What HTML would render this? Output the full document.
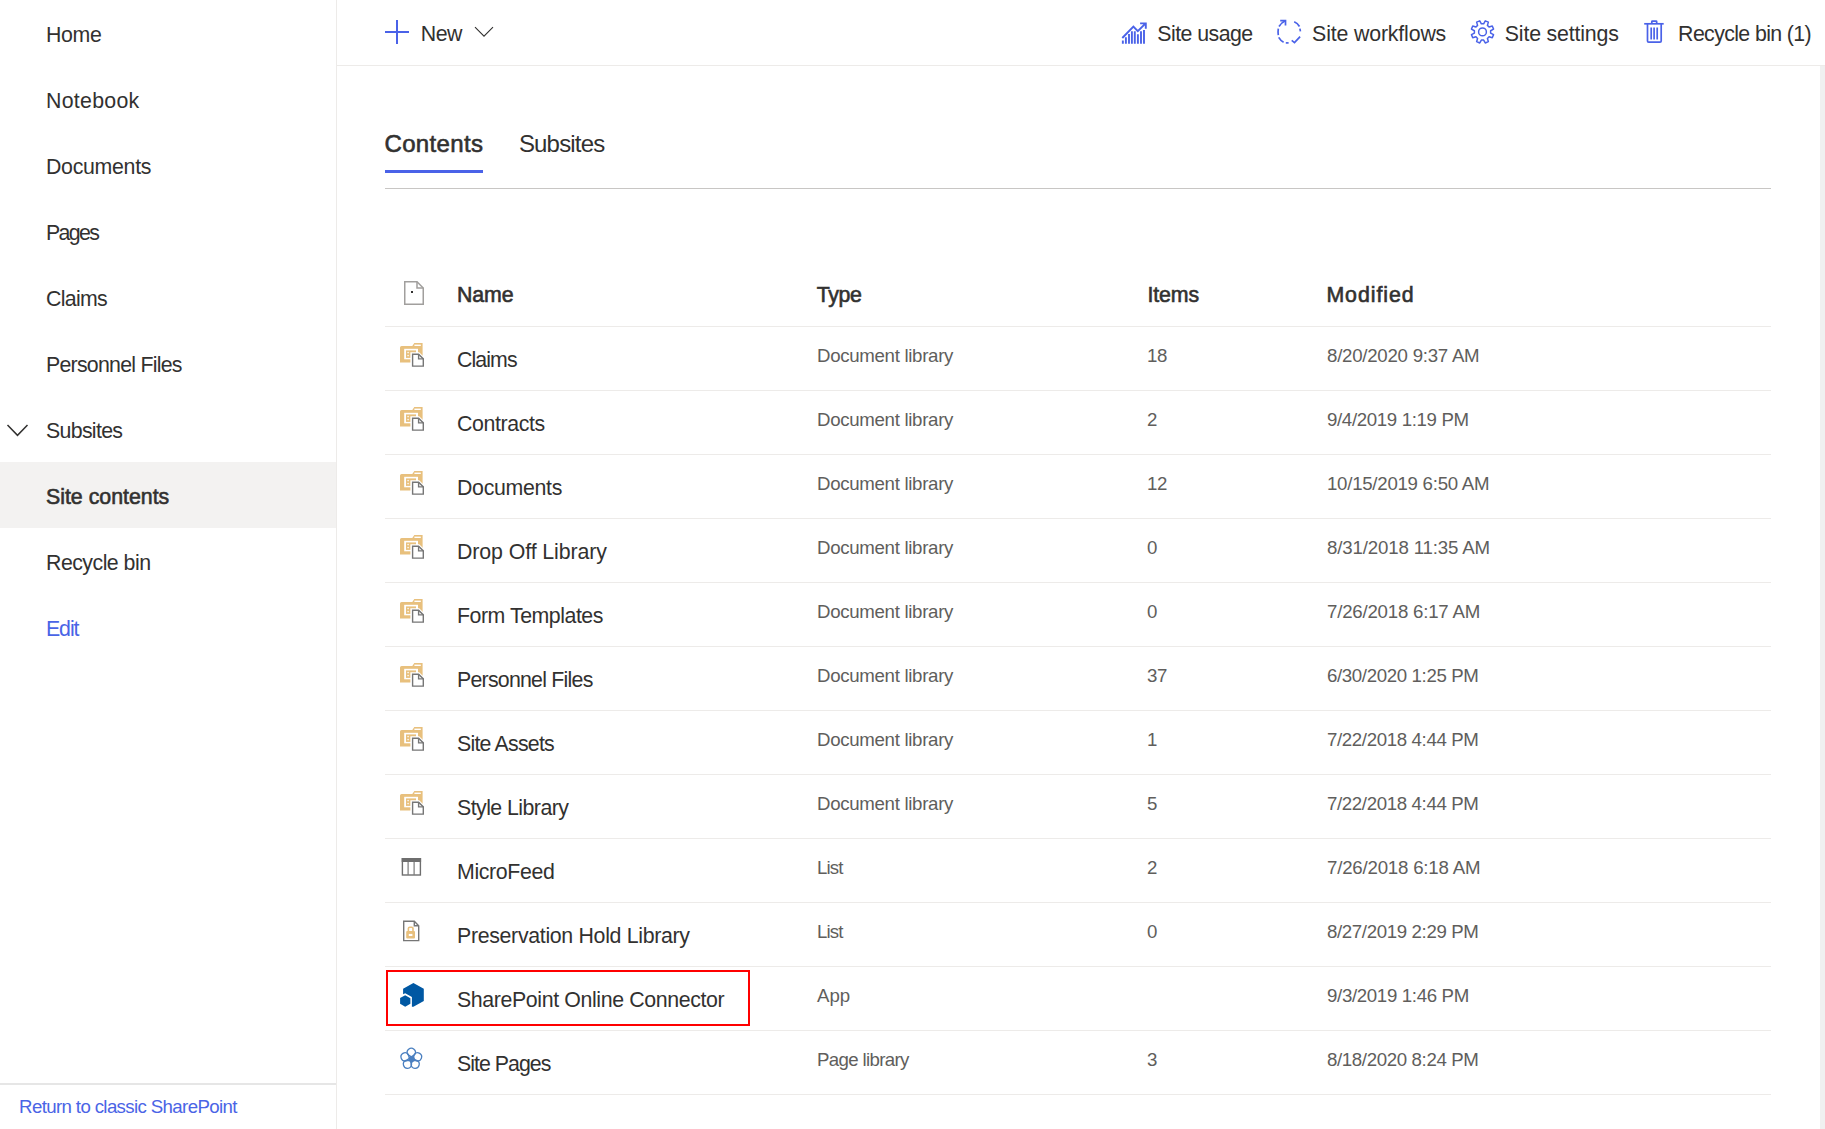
<!DOCTYPE html>
<html><head><meta charset="utf-8">
<style>
html,body{margin:0;padding:0;}
body{width:1825px;height:1129px;overflow:hidden;background:#fff;position:relative;font-family:"Liberation Sans",sans-serif;color:#323130;}
.a{position:absolute;white-space:nowrap;}
.t{position:absolute;white-space:nowrap;font-size:21.33px;line-height:24px;letter-spacing:-0.4px;color:#323130;}
.b{font-weight:normal;-webkit-text-stroke:0.6px #323130;}
.s{position:absolute;white-space:nowrap;font-size:18.67px;line-height:22px;letter-spacing:-0.35px;color:#605e5c;}
.blue{color:#4a64e6;}
</style></head><body>

<div class="a" style="left:336px;top:0;width:1px;height:1129px;background:#edebe9"></div>
<div class="a" style="left:0;top:462px;width:336px;height:66px;background:#f3f2f1"></div>
<div id="x1" class="t" style="left:46.00px;top:23px;letter-spacing:-0.332px">Home</div>
<div id="x2" class="t" style="left:46.00px;top:89px;letter-spacing:0.270px">Notebook</div>
<div id="x3" class="t" style="left:46.00px;top:155px;letter-spacing:-0.300px">Documents</div>
<div id="x4" class="t" style="left:46.00px;top:221px;letter-spacing:-1.650px">Pages</div>
<div id="x5" class="t" style="left:46.00px;top:287px;letter-spacing:-0.680px">Claims</div>
<div id="x6" class="t" style="left:46.00px;top:353px;letter-spacing:-0.757px">Personnel Files</div>
<div id="x7" class="t" style="left:46.00px;top:419px;letter-spacing:-0.686px">Subsites</div>
<div id="x8" class="t b" style="left:46.00px;top:485px;letter-spacing:-0.008px">Site contents</div>
<div id="x9" class="t" style="left:46.00px;top:551px;letter-spacing:-0.520px">Recycle bin</div>
<div id="x10" class="t blue" style="left:46.00px;top:617px;letter-spacing:-1.101px">Edit</div>
<svg class="a" style="left:6px;top:423px" width="24" height="16" viewBox="0 0 24 16"><path d="M1.5 2 L11.5 12.3 L21.5 2" fill="none" stroke="#323130" stroke-width="1.5"/></svg>
<div class="a" style="left:0;top:1083px;width:336px;height:2px;background:#e6e6e6"></div>
<div id="x11" class="s blue" style="left:19.10px;top:1096px;letter-spacing:-0.634px">Return to classic SharePoint</div>
<div class="a" style="left:337px;top:65px;width:1488px;height:1px;background:#edebe9"></div>
<svg class="a" style="left:385px;top:20px" width="24" height="24" viewBox="0 0 24 24"><path d="M0 12H24M12 0V24" stroke="#4a62e8" stroke-width="2"/></svg>
<div id="x12" class="t" style="left:420.80px;top:22px;letter-spacing:-0.550px">New</div>
<svg class="a" style="left:474px;top:26px" width="20" height="12" viewBox="0 0 20 12"><path d="M1 1.2L10 10.2L19 1.2" fill="none" stroke="#323130" stroke-width="1.1"/></svg>
<svg class="a" style="left:1117px;top:17px" width="35" height="33" viewBox="0 0 35 33"><path d="M5.85 23.4V26.8M8.9 20.2V26.8M12 17.1V26.8M14.9 14.2V26.8M17.8 14.2V26.8M20.9 17.3V26.8M24 14.2V26.8M27 13V26.8" stroke="#4a62e8" stroke-width="1.9" fill="none"/><path d="M5.3 21L16.4 9.6L20.8 14.2L28.1 6.8M23.1 6.4H28.8V11.8" stroke="#4a62e8" stroke-width="1.9" fill="none"/></svg>
<div id="x13" class="t" style="left:1157.30px;top:22px;letter-spacing:-0.545px">Site usage</div>
<svg class="a" style="left:1270px;top:15px" width="40" height="35" viewBox="0 0 40 35"><g stroke="#4a62e8" stroke-width="1.7" fill="none">
<path d="M9 11.5Q11.5 7.5 15.3 5.8"/><path d="M10.2 5.6H15.5V10.5"/>
<path d="M24.2 6.7Q27.8 8.3 29.5 11.5"/><path d="M29.9 13.6L30.4 16.4"/>
<path d="M8.3 13.6Q7.8 17 8.3 20.2"/><path d="M8.7 22.3Q10.6 25.6 13.6 27.2"/><path d="M15.8 27.9H18.6"/>
<path d="M21.7 25.4L24.5 27.6L30.1 21.6"/></g></svg>
<div id="x14" class="t" style="left:1312.10px;top:22px;letter-spacing:-0.162px">Site workflows</div>
<svg class="a" style="left:1465px;top:15px" width="35" height="35" viewBox="0 0 35 35"><path d="M16.36 8.78 L18.64 8.78 L20.26 5.84 L23.37 7.13 L22.43 10.35 L24.05 11.97 L27.27 11.03 L28.56 14.14 L25.62 15.76 L25.62 18.04 L28.56 19.66 L27.27 22.77 L24.05 21.83 L22.43 23.45 L23.37 26.67 L20.26 27.96 L18.64 25.02 L16.36 25.02 L14.74 27.96 L11.63 26.67 L12.57 23.45 L10.95 21.83 L7.73 22.77 L6.44 19.66 L9.38 18.04 L9.38 15.76 L6.44 14.14 L7.73 11.03 L10.95 11.97 L12.57 10.35 L11.63 7.13 L14.74 5.84Z" fill="none" stroke="#4a62e8" stroke-width="1.5" stroke-linejoin="round"/><circle cx="17.5" cy="16.9" r="3.9" fill="none" stroke="#4a62e8" stroke-width="1.5"/></svg>
<div id="x15" class="t" style="left:1504.80px;top:22px;letter-spacing:-0.176px">Site settings</div>
<svg class="a" style="left:1638px;top:15px" width="35" height="35" viewBox="0 0 35 35"><g stroke="#4a62e8" stroke-width="1.7" fill="none">
<path d="M6.2 8.8H25.7"/><path d="M13.8 8.8V6.8Q13.8 6.2 14.4 6.2H18.1Q18.7 6.2 18.7 6.8V8.8"/>
<path d="M9.5 8.8V26Q9.5 27.2 10.7 27.2H22Q23.2 27.2 23.2 26V8.8"/>
<path d="M13.2 12.4V24.5M16.1 12.4V24.5M19.2 12.4V24.5"/></g></svg>
<div id="x16" class="t" style="left:1678.10px;top:22px;letter-spacing:-0.619px">Recycle bin (1)</div>
<div class="a" style="left:1820px;top:66px;width:5px;height:1063px;background:#f0f0f0"></div>
<div id="x17" class="t b" style="left:384.50px;top:130px;letter-spacing:0.341px;font-size:24px;line-height:28px">Contents</div>
<div id="x18" class="t" style="left:518.90px;top:130px;letter-spacing:-0.814px;font-size:24px;line-height:28px">Subsites</div>
<div class="a" style="left:385px;top:170px;width:98px;height:3px;background:#4a62e8"></div>
<div class="a" style="left:385px;top:188px;width:1386px;height:1px;background:#c8c6c4"></div>
<svg class="a" style="left:404px;top:281px" width="20" height="24" viewBox="0 0 20 24"><path d="M0.75 0.75H13L19.25 7V23.25H0.75Z" fill="#fff" stroke="#a19f9d" stroke-width="1.5"/><path d="M13 0.75V7H19.25" fill="none" stroke="#a19f9d" stroke-width="1.5"/></svg>
<div id="x19" class="t b" style="left:457.00px;top:283px;letter-spacing:-0.100px">Name</div>
<div id="x20" class="t b" style="left:816.70px;top:283px;letter-spacing:-0.334px">Type</div>
<div id="x21" class="t b" style="left:1147.50px;top:283px;letter-spacing:-0.150px">Items</div>
<div id="x22" class="t b" style="left:1326.40px;top:283px;letter-spacing:0.957px">Modified</div>
<div class="a" style="left:411px;top:291px;width:1.5px;height:1.5px;background:#323130"></div>
<div class="a" style="left:385px;top:326px;width:1386px;height:1px;background:#edebe9"></div>
<svg class="a" style="left:395px;top:338px" width="35" height="40" viewBox="0 0 35 40">
<path d="M5 24.4V9.6Q5 8 6.6 8H17.3L19.3 5H27.6V24.4Z" fill="#e8c07d"/>
<rect x="19.4" y="6.6" width="6.4" height="1.4" fill="#fff"/>
<rect x="9.2" y="10.8" width="13.8" height="10.5" fill="#fff"/>
<rect x="11" y="12.4" width="10" height="7.5" fill="#e8c07d"/>
<circle cx="13.1" cy="14.6" r="0.8" fill="#fff"/><circle cx="13.1" cy="17.6" r="0.8" fill="#fff"/>
<path d="M15.4 30.2V14.2H24.2L30.4 20.4V30.2Z" fill="#fff"/>
<path d="M17.6 16.2H23.6L28.3 20.9V28.1H17.6Z" fill="#fff" stroke="#767676" stroke-width="1.4"/>
<path d="M23.6 16.2V20.9H28.3" fill="none" stroke="#767676" stroke-width="1.4"/>
</svg>
<div id="x23" class="t" style="left:457.00px;top:348px;letter-spacing:-0.920px">Claims</div>
<div id="x24" class="s" style="left:817.00px;top:345px;letter-spacing:-0.309px">Document library</div>
<div id="x25" class="s" style="left:1147.00px;top:345px">18</div>
<div id="x26" class="s" style="left:1327.00px;top:345px;letter-spacing:-0.250px">8/20/2020 9:37 AM</div>
<div class="a" style="left:385px;top:390px;width:1386px;height:1px;background:#edebe9"></div>
<svg class="a" style="left:395px;top:402px" width="35" height="40" viewBox="0 0 35 40">
<path d="M5 24.4V9.6Q5 8 6.6 8H17.3L19.3 5H27.6V24.4Z" fill="#e8c07d"/>
<rect x="19.4" y="6.6" width="6.4" height="1.4" fill="#fff"/>
<rect x="9.2" y="10.8" width="13.8" height="10.5" fill="#fff"/>
<rect x="11" y="12.4" width="10" height="7.5" fill="#e8c07d"/>
<circle cx="13.1" cy="14.6" r="0.8" fill="#fff"/><circle cx="13.1" cy="17.6" r="0.8" fill="#fff"/>
<path d="M15.4 30.2V14.2H24.2L30.4 20.4V30.2Z" fill="#fff"/>
<path d="M17.6 16.2H23.6L28.3 20.9V28.1H17.6Z" fill="#fff" stroke="#767676" stroke-width="1.4"/>
<path d="M23.6 16.2V20.9H28.3" fill="none" stroke="#767676" stroke-width="1.4"/>
</svg>
<div id="x27" class="t" style="left:457.00px;top:412px;letter-spacing:-0.391px">Contracts</div>
<div id="x28" class="s" style="left:817.00px;top:409px;letter-spacing:-0.309px">Document library</div>
<div id="x29" class="s" style="left:1147.00px;top:409px">2</div>
<div id="x30" class="s" style="left:1327.00px;top:409px;letter-spacing:-0.350px">9/4/2019 1:19 PM</div>
<div class="a" style="left:385px;top:454px;width:1386px;height:1px;background:#edebe9"></div>
<svg class="a" style="left:395px;top:466px" width="35" height="40" viewBox="0 0 35 40">
<path d="M5 24.4V9.6Q5 8 6.6 8H17.3L19.3 5H27.6V24.4Z" fill="#e8c07d"/>
<rect x="19.4" y="6.6" width="6.4" height="1.4" fill="#fff"/>
<rect x="9.2" y="10.8" width="13.8" height="10.5" fill="#fff"/>
<rect x="11" y="12.4" width="10" height="7.5" fill="#e8c07d"/>
<circle cx="13.1" cy="14.6" r="0.8" fill="#fff"/><circle cx="13.1" cy="17.6" r="0.8" fill="#fff"/>
<path d="M15.4 30.2V14.2H24.2L30.4 20.4V30.2Z" fill="#fff"/>
<path d="M17.6 16.2H23.6L28.3 20.9V28.1H17.6Z" fill="#fff" stroke="#767676" stroke-width="1.4"/>
<path d="M23.6 16.2V20.9H28.3" fill="none" stroke="#767676" stroke-width="1.4"/>
</svg>
<div id="x31" class="t" style="left:457.00px;top:476px;letter-spacing:-0.309px">Documents</div>
<div id="x32" class="s" style="left:817.00px;top:473px;letter-spacing:-0.309px">Document library</div>
<div id="x33" class="s" style="left:1147.00px;top:473px">12</div>
<div id="x34" class="s" style="left:1327.00px;top:473px;letter-spacing:-0.267px">10/15/2019 6:50 AM</div>
<div class="a" style="left:385px;top:518px;width:1386px;height:1px;background:#edebe9"></div>
<svg class="a" style="left:395px;top:530px" width="35" height="40" viewBox="0 0 35 40">
<path d="M5 24.4V9.6Q5 8 6.6 8H17.3L19.3 5H27.6V24.4Z" fill="#e8c07d"/>
<rect x="19.4" y="6.6" width="6.4" height="1.4" fill="#fff"/>
<rect x="9.2" y="10.8" width="13.8" height="10.5" fill="#fff"/>
<rect x="11" y="12.4" width="10" height="7.5" fill="#e8c07d"/>
<circle cx="13.1" cy="14.6" r="0.8" fill="#fff"/><circle cx="13.1" cy="17.6" r="0.8" fill="#fff"/>
<path d="M15.4 30.2V14.2H24.2L30.4 20.4V30.2Z" fill="#fff"/>
<path d="M17.6 16.2H23.6L28.3 20.9V28.1H17.6Z" fill="#fff" stroke="#767676" stroke-width="1.4"/>
<path d="M23.6 16.2V20.9H28.3" fill="none" stroke="#767676" stroke-width="1.4"/>
</svg>
<div id="x35" class="t" style="left:457.00px;top:540px;letter-spacing:-0.092px">Drop Off Library</div>
<div id="x36" class="s" style="left:817.00px;top:537px;letter-spacing:-0.309px">Document library</div>
<div id="x37" class="s" style="left:1147.00px;top:537px">0</div>
<div id="x38" class="s" style="left:1327.00px;top:537px;letter-spacing:-0.150px">8/31/2018 11:35 AM</div>
<div class="a" style="left:385px;top:582px;width:1386px;height:1px;background:#edebe9"></div>
<svg class="a" style="left:395px;top:594px" width="35" height="40" viewBox="0 0 35 40">
<path d="M5 24.4V9.6Q5 8 6.6 8H17.3L19.3 5H27.6V24.4Z" fill="#e8c07d"/>
<rect x="19.4" y="6.6" width="6.4" height="1.4" fill="#fff"/>
<rect x="9.2" y="10.8" width="13.8" height="10.5" fill="#fff"/>
<rect x="11" y="12.4" width="10" height="7.5" fill="#e8c07d"/>
<circle cx="13.1" cy="14.6" r="0.8" fill="#fff"/><circle cx="13.1" cy="17.6" r="0.8" fill="#fff"/>
<path d="M15.4 30.2V14.2H24.2L30.4 20.4V30.2Z" fill="#fff"/>
<path d="M17.6 16.2H23.6L28.3 20.9V28.1H17.6Z" fill="#fff" stroke="#767676" stroke-width="1.4"/>
<path d="M23.6 16.2V20.9H28.3" fill="none" stroke="#767676" stroke-width="1.4"/>
</svg>
<div id="x39" class="t" style="left:457.00px;top:604px;letter-spacing:-0.470px">Form Templates</div>
<div id="x40" class="s" style="left:817.00px;top:601px;letter-spacing:-0.309px">Document library</div>
<div id="x41" class="s" style="left:1147.00px;top:601px">0</div>
<div id="x42" class="s" style="left:1327.00px;top:601px;letter-spacing:-0.213px">7/26/2018 6:17 AM</div>
<div class="a" style="left:385px;top:646px;width:1386px;height:1px;background:#edebe9"></div>
<svg class="a" style="left:395px;top:658px" width="35" height="40" viewBox="0 0 35 40">
<path d="M5 24.4V9.6Q5 8 6.6 8H17.3L19.3 5H27.6V24.4Z" fill="#e8c07d"/>
<rect x="19.4" y="6.6" width="6.4" height="1.4" fill="#fff"/>
<rect x="9.2" y="10.8" width="13.8" height="10.5" fill="#fff"/>
<rect x="11" y="12.4" width="10" height="7.5" fill="#e8c07d"/>
<circle cx="13.1" cy="14.6" r="0.8" fill="#fff"/><circle cx="13.1" cy="17.6" r="0.8" fill="#fff"/>
<path d="M15.4 30.2V14.2H24.2L30.4 20.4V30.2Z" fill="#fff"/>
<path d="M17.6 16.2H23.6L28.3 20.9V28.1H17.6Z" fill="#fff" stroke="#767676" stroke-width="1.4"/>
<path d="M23.6 16.2V20.9H28.3" fill="none" stroke="#767676" stroke-width="1.4"/>
</svg>
<div id="x43" class="t" style="left:457.00px;top:668px;letter-spacing:-0.763px">Personnel Files</div>
<div id="x44" class="s" style="left:817.00px;top:665px;letter-spacing:-0.309px">Document library</div>
<div id="x45" class="s" style="left:1147.00px;top:665px">37</div>
<div id="x46" class="s" style="left:1327.00px;top:665px;letter-spacing:-0.362px">6/30/2020 1:25 PM</div>
<div class="a" style="left:385px;top:710px;width:1386px;height:1px;background:#edebe9"></div>
<svg class="a" style="left:395px;top:722px" width="35" height="40" viewBox="0 0 35 40">
<path d="M5 24.4V9.6Q5 8 6.6 8H17.3L19.3 5H27.6V24.4Z" fill="#e8c07d"/>
<rect x="19.4" y="6.6" width="6.4" height="1.4" fill="#fff"/>
<rect x="9.2" y="10.8" width="13.8" height="10.5" fill="#fff"/>
<rect x="11" y="12.4" width="10" height="7.5" fill="#e8c07d"/>
<circle cx="13.1" cy="14.6" r="0.8" fill="#fff"/><circle cx="13.1" cy="17.6" r="0.8" fill="#fff"/>
<path d="M15.4 30.2V14.2H24.2L30.4 20.4V30.2Z" fill="#fff"/>
<path d="M17.6 16.2H23.6L28.3 20.9V28.1H17.6Z" fill="#fff" stroke="#767676" stroke-width="1.4"/>
<path d="M23.6 16.2V20.9H28.3" fill="none" stroke="#767676" stroke-width="1.4"/>
</svg>
<div id="x47" class="t" style="left:457.00px;top:732px;letter-spacing:-0.780px">Site Assets</div>
<div id="x48" class="s" style="left:817.00px;top:729px;letter-spacing:-0.309px">Document library</div>
<div id="x49" class="s" style="left:1147.00px;top:729px">1</div>
<div id="x50" class="s" style="left:1327.00px;top:729px;letter-spacing:-0.362px">7/22/2018 4:44 PM</div>
<div class="a" style="left:385px;top:774px;width:1386px;height:1px;background:#edebe9"></div>
<svg class="a" style="left:395px;top:786px" width="35" height="40" viewBox="0 0 35 40">
<path d="M5 24.4V9.6Q5 8 6.6 8H17.3L19.3 5H27.6V24.4Z" fill="#e8c07d"/>
<rect x="19.4" y="6.6" width="6.4" height="1.4" fill="#fff"/>
<rect x="9.2" y="10.8" width="13.8" height="10.5" fill="#fff"/>
<rect x="11" y="12.4" width="10" height="7.5" fill="#e8c07d"/>
<circle cx="13.1" cy="14.6" r="0.8" fill="#fff"/><circle cx="13.1" cy="17.6" r="0.8" fill="#fff"/>
<path d="M15.4 30.2V14.2H24.2L30.4 20.4V30.2Z" fill="#fff"/>
<path d="M17.6 16.2H23.6L28.3 20.9V28.1H17.6Z" fill="#fff" stroke="#767676" stroke-width="1.4"/>
<path d="M23.6 16.2V20.9H28.3" fill="none" stroke="#767676" stroke-width="1.4"/>
</svg>
<div id="x51" class="t" style="left:457.00px;top:796px;letter-spacing:-0.549px">Style Library</div>
<div id="x52" class="s" style="left:817.00px;top:793px;letter-spacing:-0.309px">Document library</div>
<div id="x53" class="s" style="left:1147.00px;top:793px">5</div>
<div id="x54" class="s" style="left:1327.00px;top:793px;letter-spacing:-0.362px">7/22/2018 4:44 PM</div>
<div class="a" style="left:385px;top:838px;width:1386px;height:1px;background:#edebe9"></div>
<svg class="a" style="left:395px;top:850px" width="35" height="40" viewBox="0 0 35 40">
<rect x="7.4" y="8.7" width="18" height="16.3" fill="none" stroke="#6e6e6e" stroke-width="1.4"/>
<rect x="6.7" y="8" width="19.4" height="4" fill="#6e6e6e"/>
<path d="M13.1 12V25M19.1 12V25" stroke="#7a7a7a" stroke-width="1.2"/>
</svg>
<div id="x55" class="t" style="left:457.00px;top:860px;letter-spacing:-0.366px">MicroFeed</div>
<div id="x56" class="s" style="left:817.00px;top:857px;letter-spacing:-0.882px">List</div>
<div id="x57" class="s" style="left:1147.00px;top:857px">2</div>
<div id="x58" class="s" style="left:1327.00px;top:857px;letter-spacing:-0.200px">7/26/2018 6:18 AM</div>
<div class="a" style="left:385px;top:902px;width:1386px;height:1px;background:#edebe9"></div>
<svg class="a" style="left:395px;top:913px" width="35" height="40" viewBox="0 0 35 40">
<path d="M8.7 8.3H19L23.7 13V40.6H8.7Z" transform="translate(0,0)" fill="none"/>
<path d="M8.7 8.3H19.3L23.7 12.7V27.6H8.7Z" fill="#fff" stroke="#767676" stroke-width="1.4"/>
<path d="M19.3 8.3V12.7H23.7" fill="none" stroke="#767676" stroke-width="1.4"/>
<rect x="13.4" y="14.3" width="4.6" height="5" rx="1.2" fill="none" stroke="#e8c07d" stroke-width="1.6"/>
<rect x="11.2" y="18" width="8.8" height="7.5" rx="1" fill="#e8c07d"/>
<rect x="13.8" y="20.9" width="3.6" height="2.1" fill="#fff"/>
</svg>
<div id="x59" class="t" style="left:457.00px;top:924px;letter-spacing:-0.319px">Preservation Hold Library</div>
<div id="x60" class="s" style="left:817.00px;top:921px;letter-spacing:-0.882px">List</div>
<div id="x61" class="s" style="left:1147.00px;top:921px">0</div>
<div id="x62" class="s" style="left:1327.00px;top:921px;letter-spacing:-0.362px">8/27/2019 2:29 PM</div>
<div class="a" style="left:385px;top:966px;width:1386px;height:1px;background:#edebe9"></div>
<svg class="a" style="left:393px;top:977px" width="40" height="40" viewBox="0 0 40 40">
<path d="M20.4 6L30.8 11.8V24.1L20.4 29.8H18.9V20.1L12.2 16.3L10.1 17.3V11.8Z" fill="#0058a3"/>
<path d="M12.2 18.3L17.4 21.2V26.7L12.2 29.8L7.1 26.8V20.9Z" fill="#0058a3"/>
</svg>
<div id="x63" class="t" style="left:457.00px;top:988px;letter-spacing:-0.378px">SharePoint Online Connector</div>
<div id="x64" class="s" style="left:817.00px;top:985px;letter-spacing:0.000px">App</div>
<div id="x65" class="s" style="left:1327.00px;top:985px;letter-spacing:-0.337px">9/3/2019 1:46 PM</div>
<div class="a" style="left:385px;top:1030px;width:1386px;height:1px;background:#edebe9"></div>
<svg class="a" style="left:393px;top:1041px" width="40" height="40" viewBox="0 0 40 40">
<g transform="translate(18.3 17.9)" fill="none" stroke="#4a7fc0" stroke-width="1.3" stroke-linejoin="round">
<path d="M0 -2L-3.5 -4.4A4.1 4.1 0 1 1 3.5 -4.4Z"/>
<path d="M0 -2L-3.5 -4.4A4.1 4.1 0 1 1 3.5 -4.4Z" transform="rotate(72)"/>
<path d="M0 -2L-3.5 -4.4A4.1 4.1 0 1 1 3.5 -4.4Z" transform="rotate(144)"/>
<path d="M0 -2L-3.5 -4.4A4.1 4.1 0 1 1 3.5 -4.4Z" transform="rotate(216)"/>
<path d="M0 -2L-3.5 -4.4A4.1 4.1 0 1 1 3.5 -4.4Z" transform="rotate(288)"/>
<circle cx="0.4" cy="0.2" r="3.1" fill="#4a7fc0" stroke="none"/>
</g>
</svg>
<div id="x66" class="t" style="left:457.00px;top:1052px;letter-spacing:-0.980px">Site Pages</div>
<div id="x67" class="s" style="left:817.00px;top:1049px;letter-spacing:-0.658px">Page library</div>
<div id="x68" class="s" style="left:1147.00px;top:1049px">3</div>
<div id="x69" class="s" style="left:1327.00px;top:1049px;letter-spacing:-0.362px">8/18/2020 8:24 PM</div>
<div class="a" style="left:385px;top:1094px;width:1386px;height:1px;background:#edebe9"></div>
<div class="a" style="left:386px;top:970px;width:360px;height:52px;border:2px solid #ff0000"></div>
</body></html>
